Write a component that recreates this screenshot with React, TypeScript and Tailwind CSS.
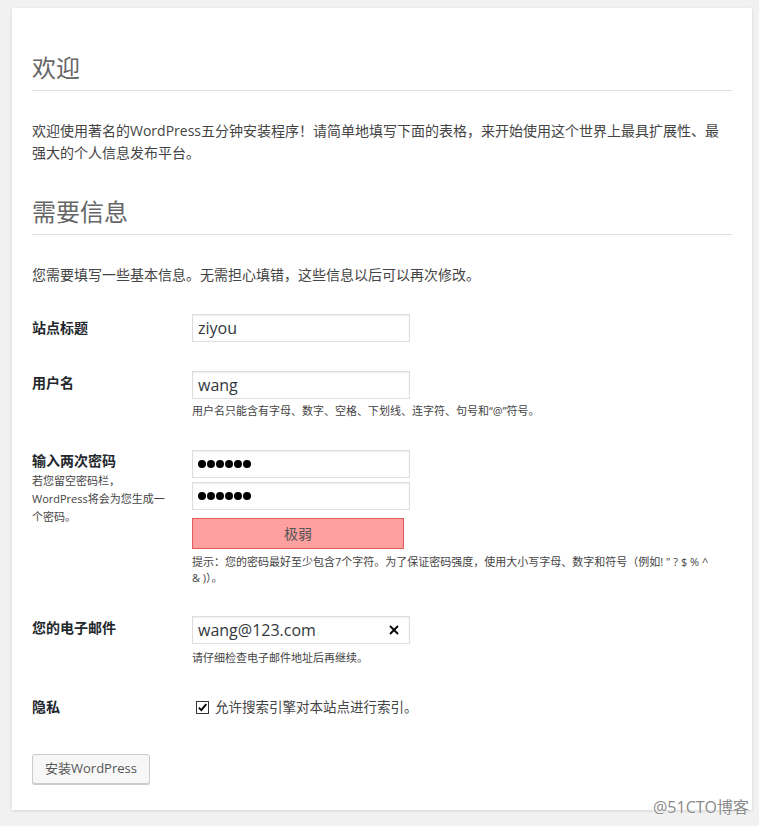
import React from "react";

const font = {
    fontFamily: '"Open Sans", "Noto Sans CJK SC", sans-serif',
};

function Field({ value, right }: { value: string; right?: React.ReactNode }) {
    return (
        <div className="flex h-[28px] w-[218px] items-center justify-between border border-[#dddddd] bg-white pl-[5px] pr-[10px] text-[16px] text-[#32373c] shadow-[inset_0_1px_2px_rgba(0,0,0,0.07)]">
            <span>{value}</span>
            {right}
        </div>
    );
}

function Dots() {
    return (
        <div className="flex h-[28px] w-[218px] items-center gap-[1px] border border-[#dddddd] bg-white pl-[5px] shadow-[inset_0_1px_2px_rgba(0,0,0,0.07)]">
            {[0, 1, 2, 3, 4, 5].map((i) => (
                <span key={i} className="block h-[8px] w-[8px] rounded-full bg-black" />
            ))}
        </div>
    );
}

export default function App() {
    return (
        <div className="relative min-h-[826px] bg-[#f1f1f1] px-[12px] pt-[8px]" style={font}>
            <div className="w-[740px] bg-white px-[20px] pb-[26px] pt-[44px] text-[#444444] shadow-[0_1px_3px_rgba(0,0,0,0.13)]">
                <h1 className="border-b border-[#dddddd] pb-[6px] text-[24px] leading-[32px] text-[#666666]">
                    欢迎
                </h1>

                <p className="mt-[29px] whitespace-nowrap text-[14px] leading-[22px]">
                    欢迎使用著名的WordPress五分钟安装程序！请简单地填写下面的表格，来开始使用这个世界上最具扩展性、最
                    <br />
                    强大的个人信息发布平台。
                </p>

                <h1 className="mt-[32px] border-b border-[#dddddd] pb-[6px] text-[24px] leading-[32px] text-[#666666]">
                    需要信息
                </h1>

                <p className="mt-[29px] text-[14px] leading-[22px]">
                    您需要填写一些基本信息。无需担心填错，这些信息以后可以再次修改。
                </p>

                {/* 站点标题 */}
                <div className="mt-[28px] flex">
                    <div className="w-[160px] pt-[4px] text-[14px] font-bold leading-[20px] text-[#23282d]">
                        站点标题
                    </div>
                    <Field value="ziyou" />
                </div>

                {/* 用户名 */}
                <div className="mt-[29px] flex">
                    <div className="w-[160px] pt-[2px] text-[14px] font-bold leading-[20px] text-[#23282d]">
                        用户名
                    </div>
                    <div>
                        <Field value="wang" />
                        <p className="mt-[4px] text-[11px] leading-[16px]">
                            用户名只能含有字母、数字、空格、下划线、连字符、句号和“@”符号。
                        </p>
                    </div>
                </div>

                {/* 密码 */}
                <div className="mt-[31px] flex">
                    <div className="w-[160px] pt-[1px]">
                        <div className="text-[14px] font-bold leading-[20px] text-[#23282d]">
                            输入两次密码
                        </div>
                        <p className="mt-[1px] whitespace-nowrap text-[11px] leading-[18px]">
                            若您留空密码栏，
                            <br />
                            WordPress将会为您生成一
                            <br />
                            个密码。
                        </p>
                    </div>
                    <div>
                        <Dots />
                        <div className="mt-[4px]">
                            <Dots />
                        </div>
                        <div className="mt-[8px] flex h-[31px] w-[212px] items-center justify-center border border-[#e35b5b] bg-[#ffa0a0] text-[14px] text-[#555555]">
                            极弱
                        </div>
                        <p className="mt-[5px] whitespace-nowrap text-[11px] leading-[16px]">
                            提示：您的密码最好至少包含7个字符。为了保证密码强度，使用大小写字母、数字和符号（例如! " ? $ % ^
                            <br />
                            &amp; )）。
                        </p>
                    </div>
                </div>

                {/* 邮件 */}
                <div className="mt-[30px] flex">
                    <div className="w-[160px] pt-[2px] text-[14px] font-bold leading-[20px] text-[#23282d]">
                        您的电子邮件
                    </div>
                    <div>
                        <Field
                            value="wang@123.com"
                            right={
                                <svg width="10" height="10" viewBox="0 0 10 10">
                                    <path d="M1 1 L9 9 M9 1 L1 9" stroke="#000" strokeWidth="1.8" />
                                </svg>
                            }
                        />
                        <p className="mt-[6px] text-[11px] leading-[16px]">
                            请仔细检查电子邮件地址后再继续。
                        </p>
                    </div>
                </div>

                {/* 隐私 */}
                <div className="mt-[31px] flex">
                    <div className="w-[160px] text-[14px] font-bold leading-[20px] text-[#23282d]">
                        隐私
                    </div>
                    <label className="flex items-center gap-[6px] pl-[4px] text-[13.5px] leading-[18px]">
                        <svg width="13" height="13" viewBox="0 0 13 13">
                            <rect x="0.5" y="0.5" width="12" height="12" fill="#fff" stroke="#333" />
                            <path d="M2.8 6.6 L5.3 9.2 L10.3 3.2" fill="none" stroke="#000" strokeWidth="1.9" />
                        </svg>
                        允许搜索引擎对本站点进行索引。
                    </label>
                </div>

                <button className="mt-[37px] h-[30px] rounded-[3px] border border-[#cccccc] bg-[#f7f7f7] px-[12px] text-[13px] text-[#555555] shadow-[0_1px_0_#cccccc]">
                    安装WordPress
                </button>
            </div>

            <div className="absolute bottom-[9px] right-[10px] text-[16px] leading-[20px] text-[#8a8a8a] [text-shadow:0_0_2px_#fff,0_0_2px_#fff]">
                @51CTO博客
            </div>
        </div>
    );
}
